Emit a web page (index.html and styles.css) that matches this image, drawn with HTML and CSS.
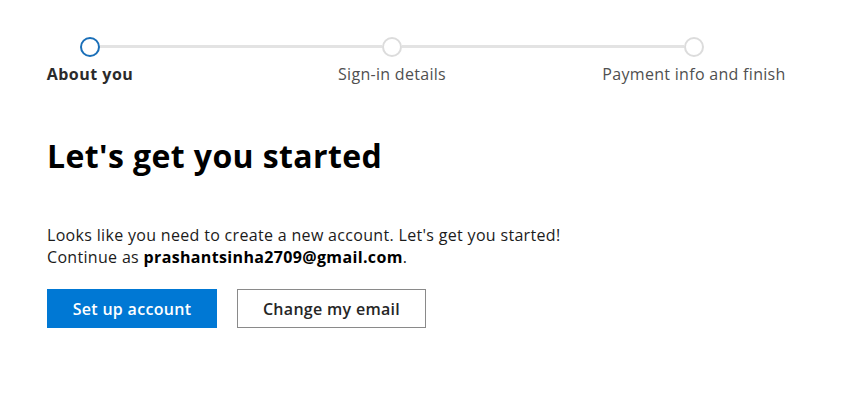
FILE: index.html
```html
<!DOCTYPE html>
<html>
<head>
<meta charset="utf-8">
<link rel="stylesheet" href="styles.css">
</head>
<body>
<main class="page">
  <div class="stepper">
    <div class="step active">
      <span class="dot"></span>
      <span class="label">About you</span>
    </div>
    <div class="line"></div>
    <div class="step">
      <span class="dot"></span>
      <span class="label">Sign-in details</span>
    </div>
    <div class="line"></div>
    <div class="step">
      <span class="dot"></span>
      <span class="label">Payment info and finish</span>
    </div>
  </div>
  <h1 class="title">Let's get you started</h1>
  <p class="desc">Looks like you need to create a new account. Let's get you started!<br>Continue as <strong>prashantsinha2709@gmail.com</strong>.</p>
  <div class="actions">
    <button class="btn primary">Set up account</button>
    <button class="btn secondary">Change my email</button>
  </div>
</main>
</body>
</html>
```
FILE: styles.css
```css
* { box-sizing: border-box; }
html, body { margin: 0; background: #fff; }
body { font-family: "Open Sans", "Noto Sans", sans-serif; color: #1b1b1b; }
.page { padding: 37px 0 0 47px; }
.stepper {
  display: flex;
  align-items: flex-start;
  margin-left: 33px;
  width: 624px;
}
.step {
  width: 20px;
  display: flex;
  flex-direction: column;
  align-items: center;
  flex: none;
}
.dot {
  width: 20px; height: 20px;
  border-radius: 50%;
  border: 2px solid #dcdcdc;
  display: block;
}
.step.active .dot { border-color: #1a6fb8; }
.label {
  white-space: nowrap;
  margin-top: 6px;
  font-size: 16px;
  letter-spacing: 0.3px;
  color: #505050;
  line-height: 22px;
}
.step.active .label { font-weight: 700; color: #2b2b2b; letter-spacing: 0.5px; }
.line {
  flex: 1;
  height: 3px;
  background: #e3e3e3;
  margin-top: 8px;
}
.title {
  margin: 51px 0 0;
  font-size: 32px;
  letter-spacing: 0.4px;
  font-weight: 700;
  color: #000;
  line-height: 40px;
}
.desc {
  margin: 48px 0 0;
  font-size: 16px;
  letter-spacing: 0.32px;
  line-height: 22px;
  color: #1b1b1b;
}
.desc strong { font-weight: 700; color: #000; letter-spacing: 0.35px; }
.actions { display: flex; gap: 20px; margin-top: 21px; }
.btn {
  font-family: inherit;
  font-size: 16px;
  letter-spacing: 0.3px;
  font-weight: 600;
  height: 39px;
  padding: 0;
  cursor: pointer;
}
.primary { background: #0078d4; color: #fff; border: 1px solid #0078d4; width: 170px; }
.secondary { background: #fff; color: #262626; border: 1px solid #8a8a8a; width: 189px; }
```
